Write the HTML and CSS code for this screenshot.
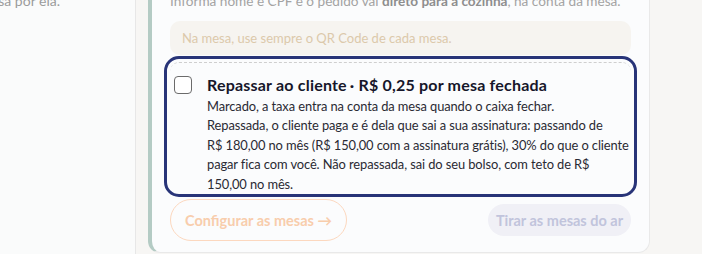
FILE: index.html
```html
<!DOCTYPE html>
<html lang="pt-BR">
<head>
<meta charset="utf-8">
<link rel="stylesheet" href="styles.css">
</head>
<body>
<div class="page">
  <aside class="side-card">
    <p class="side-text"><span class="side-inner">O caixa da casa passa por ela.</span></p>
  </aside>
  <section class="panel">
    <p class="intro">Informa nome e CPF e o pedido vai <strong>direto para a cozinha</strong>, na conta da mesa.</p>
    <div class="hint">Na mesa, use sempre o QR Code de cada mesa.</div>
    <label class="fee-option">
      <span class="check"></span>
      <span class="fee-body">
        <span class="fee-title">Repassar ao cliente<span class="dot">·</span>R$ 0,25 por mesa fechada</span>
        <span class="fee-desc">Marcado, a taxa entra na conta da mesa quando o caixa fechar.<br>Repassada, o cliente paga e é dela que sai a sua assinatura: passando de<br>R$ 180,00 no mês (R$ 150,00 com a assinatura grátis), 30% do que o cliente<br>pagar fica com você. Não repassada, sai do seu bolso, com teto de R$<br>150,00 no mês.</span>
      </span>
    </label>
    <div class="actions">
      <button class="btn-outline">Configurar as mesas →</button>
      <button class="btn-soft">Tirar as mesas do ar</button>
    </div>
  </section>
</div>
</body>
</html>
```

FILE: styles.css
```css
* { box-sizing: border-box; }
html, body { margin: 0; padding: 0; }
body {
  background: #f7f6f4;
  font-family: "Lato", "Noto Sans", sans-serif;
  width: 702px;
  height: 254px;
  overflow: hidden;
}
.page {
  display: flex;
  align-items: flex-start;
  height: 254px;
}
.side-card {
  width: 136px;
  height: 254px;
  flex: none;
  background: #fafbfb;
  border-right: 1px solid #e7e7e7;
  overflow: hidden;
}
.side-text {
  margin: -9px 0 0 0;
  width: 60px;
  font-size: 14px;
  line-height: 20px;
  color: #9b9b9b;
  white-space: nowrap;
  direction: rtl;
}
.side-inner {
  direction: ltr;
  unicode-bidi: isolate;
}
.panel {
  margin-left: 12px;
  width: 502px;
  flex: none;
  margin-top: -9px;
  background: #fbfcfd;
  border: 1px solid #e9e9e9;
  border-left: 4px solid #b4cbc4;
  border-top: none;
  border-radius: 0 0 12px 12px;
  padding: 0 18px 11px 18px;
}
.intro {
  margin: 0;
  font-size: 13.6px;
  line-height: 20px;
  color: #a3a3a3;
  white-space: nowrap;
}
.intro strong { color: #8e8e8e; font-weight: 700; }
.hint {
  margin-top: 10px;
  height: 34px;
  display: flex;
  align-items: center;
  padding: 0 12px;
  background: #f6f4f0;
  border-radius: 10px;
  font-size: 13px;
  color: #dcc9ab;
}
.fee-option {
  margin-top: 7px;
  display: flex;
  gap: 15px;
  padding: 13px 0 0 4px;
  border-top: 1px dashed #cfcfcf;
  outline: 3px solid #283478;
  outline-offset: 3px;
  border-radius: 9px;
  cursor: pointer;
}
.check {
  flex: none;
  width: 18px;
  height: 18px;
  margin-top: 0;
  border: 1.5px solid #6b6b6b;
  border-radius: 4px;
  background: #fff;
}
.fee-body {
  display: flex;
  flex-direction: column;
  margin-bottom: -3px;
  min-width: 0;
}
.fee-title {
  font-size: 16px;
  font-weight: 700;
  color: #16162a;
  line-height: 20px;
  letter-spacing: 0.2px;
  margin-top: -1px;
}
.dot { margin: 0 4px 0 3px; }
.fee-desc {
  margin-top: 2px;
  font-size: 12.9px;
  line-height: 19.4px;
  letter-spacing: -0.1px;
  color: #2a2a33;
  white-space: nowrap;
}
.actions {
  margin-top: 8px;
  display: flex;
  justify-content: space-between;
  align-items: center;
}
.btn-outline {
  height: 42px;
  width: 177px;
  border-radius: 21px;
  border: 1px solid #fcd8bf;
  background: transparent;
  color: #f8cdac;
  font-family: inherit;
  font-size: 14.5px;
  font-weight: 700;
  padding: 0;
}
.btn-soft {
  height: 32px;
  width: 143px;
  border-radius: 16px;
  border: none;
  background: #f0f0f6;
  color: #c1c4dc;
  font-family: inherit;
  font-size: 14.5px;
  font-weight: 700;
  padding: 0;
}
```
